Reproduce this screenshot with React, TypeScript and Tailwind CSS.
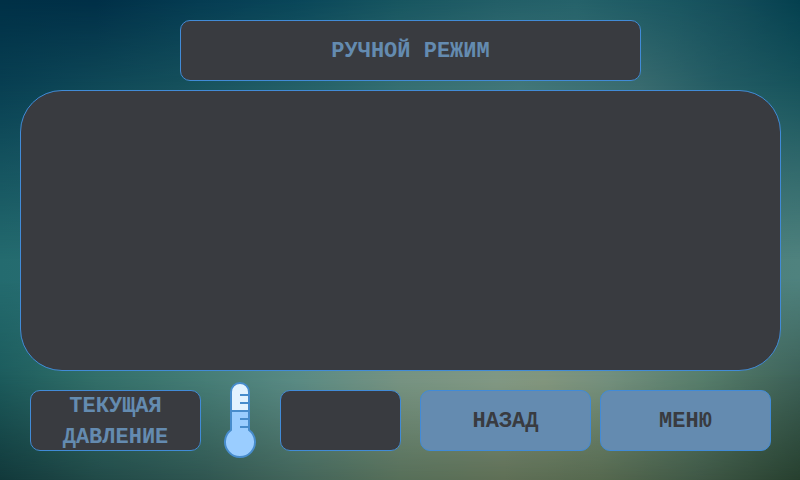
import type { ReactNode } from "react";

const bands = [
  "bg-[linear-gradient(to_right,#12393b_0%,#214a48_12%,#2f5550_25%,#43655a_37%,#576f59_50%,#5f6f56_63%,#56694f_75%,#405846_87%,#27402f_100%)]",
  "bg-[linear-gradient(to_right,#1c5c5d_0%,#33706a_12%,#467e77_25%,#5b8c86_37%,#789584_50%,#839a86_62%,#849880_68%,#75917f_76%,#577e6c_88%,#3d6158_100%)] mask-[linear-gradient(to_bottom,black_78%,transparent_100%)]",
  "bg-[linear-gradient(to_right,#246b6f_0%,#3a7776_50%,#4f827e_100%)] mask-[linear-gradient(to_bottom,black_58%,transparent_79%)]",
  "bg-[linear-gradient(to_right,#083f52_0%,#15505c_22%,#28646a_41%,#356f72_50%,#427779_65%,#396b6f_80%,#235c64_90%,#17535c_100%)] mask-[linear-gradient(to_bottom,black_18%,transparent_54%)]",
  "bg-[linear-gradient(to_right,#003046_0%,#002f47_12%,#053c52_25%,#094659_37%,#175560_50%,#225e67_62%,#25626a_72%,#195560_85%,#134c59_92%,#04404f_100%)] mask-[linear-gradient(to_bottom,black,transparent_18%)]",
];

const panel = "border border-[#418bd7] bg-[#393b40] text-[#648bb0]";

function Backdrop() {
  return (
    <div aria-hidden="true" className="absolute inset-0 -z-10">
      {bands.map((band) => (
        <div key={band} className={`absolute inset-0 ${band}`} />
      ))}
    </div>
  );
}

function ActionButton({ children }: { children: ReactNode }) {
  return (
    <button
      type="button"
      className="h-[61px] w-full cursor-pointer rounded-[10px] border border-[#418bd7] bg-[#648bb0] pt-0.5 text-[#393b40]"
    >
      {children}
    </button>
  );
}

function Thermometer() {
  return (
    <svg width="33" height="77" viewBox="0 0 33 77" aria-hidden="true">
      <path d="M7 48V10a9 9 0 0 1 18 0V48a15 15 0 1 1-18 0Z" fill="#9acdff" />
      <path d="M7 29V10a9 9 0 0 1 18 0V29Z" fill="#e2f2ff" />
      <path
        d="M7 48V10a9 9 0 0 1 18 0V48a15 15 0 1 1-18 0ZM7 29H25M16 13H25M16 21H25M16 37H25M16 45H25"
        stroke="#478ccc"
        strokeWidth="2"
        fill="none"
      />
    </svg>
  );
}

export default function App() {
  return (
    <main className="relative isolate flex min-h-screen flex-col pt-5 pr-[19px] pl-5 font-['Courier_New','Liberation_Mono',monospace] text-[22px] leading-[31px] font-bold">
      <Backdrop />
      <h1
        className={`mr-[140px] ml-40 flex h-[61px] items-center justify-center rounded-[10px] pt-0.5 ${panel}`}
      >
        РУЧНОЙ РЕЖИМ
      </h1>
      <section
        aria-label="Ручной режим"
        className={`mt-[9px] min-h-[281px] flex-1 rounded-[42px] ${panel}`}
      />
      <footer className="grid grid-cols-[1fr_79px_121px_19px_1fr_9px_1fr] items-center px-[10px] pt-[11px] pb-[21px]">
        <div
          className={`flex h-[61px] items-center justify-center rounded-[10px] pt-0.5 text-center ${panel}`}
        >
          <span>
            ТЕКУЩАЯ
            <br />
            ДАВЛЕНИЕ
          </span>
        </div>
        <div className="flex justify-center">
          <Thermometer />
        </div>
        <output
          aria-label="Текущее давление"
          className={`h-[61px] rounded-[10px] ${panel}`}
        />
        <div className="col-start-5">
          <ActionButton>НАЗАД</ActionButton>
        </div>
        <div className="col-start-7">
          <ActionButton>МЕНЮ</ActionButton>
        </div>
      </footer>
    </main>
  );
}
